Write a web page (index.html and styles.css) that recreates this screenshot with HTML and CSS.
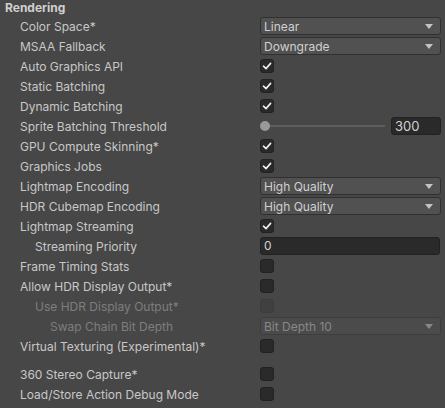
FILE: index.html
```html
<!DOCTYPE html>
<html>
<head>
<meta charset="utf-8">
<link rel="stylesheet" href="styles.css">
</head>
<body>
<div class="panel">
  <div class="header">Rendering</div>

  <div class="row"><div class="label">Color Space*</div><div class="value"><div class="dropdown"><span>Linear</span><i class="arrow"></i></div></div></div>
  <div class="row"><div class="label">MSAA Fallback</div><div class="value"><div class="dropdown"><span>Downgrade</span><i class="arrow"></i></div></div></div>
  <div class="row"><div class="label">Auto Graphics API</div><div class="value"><div class="check on"><svg viewBox="0 0 14 14"><path d="M3.5 7.2 L6 9.6 L10.6 4.4" /></svg></div></div></div>
  <div class="row"><div class="label">Static Batching</div><div class="value"><div class="check on"><svg viewBox="0 0 14 14"><path d="M3.5 7.2 L6 9.6 L10.6 4.4" /></svg></div></div></div>
  <div class="row"><div class="label">Dynamic Batching</div><div class="value"><div class="check on"><svg viewBox="0 0 14 14"><path d="M3.5 7.2 L6 9.6 L10.6 4.4" /></svg></div></div></div>
  <div class="row"><div class="label">Sprite Batching Threshold</div><div class="value slider-value"><div class="slider"><div class="track"></div><div class="thumb"></div></div><div class="field num">300</div></div></div>
  <div class="row"><div class="label">GPU Compute Skinning*</div><div class="value"><div class="check on"><svg viewBox="0 0 14 14"><path d="M3.5 7.2 L6 9.6 L10.6 4.4" /></svg></div></div></div>
  <div class="row"><div class="label">Graphics Jobs</div><div class="value"><div class="check on"><svg viewBox="0 0 14 14"><path d="M3.5 7.2 L6 9.6 L10.6 4.4" /></svg></div></div></div>
  <div class="row"><div class="label">Lightmap Encoding</div><div class="value"><div class="dropdown"><span>High Quality</span><i class="arrow"></i></div></div></div>
  <div class="row"><div class="label">HDR Cubemap Encoding</div><div class="value"><div class="dropdown"><span>High Quality</span><i class="arrow"></i></div></div></div>
  <div class="row"><div class="label">Lightmap Streaming</div><div class="value"><div class="check on"><svg viewBox="0 0 14 14"><path d="M3.5 7.2 L6 9.6 L10.6 4.4" /></svg></div></div></div>
  <div class="row"><div class="label indent1">Streaming Priority</div><div class="value"><div class="field wide">0</div></div></div>
  <div class="row"><div class="label">Frame Timing Stats</div><div class="value"><div class="check"></div></div></div>
  <div class="row"><div class="label">Allow HDR Display Output*</div><div class="value"><div class="check"></div></div></div>
  <div class="row disabled"><div class="label indent1">Use HDR Display Output*</div><div class="value"><div class="check"></div></div></div>
  <div class="row disabled"><div class="label indent2">Swap Chain Bit Depth</div><div class="value"><div class="dropdown"><span>Bit Depth 10</span><i class="arrow"></i></div></div></div>
  <div class="row"><div class="label">Virtual Texturing (Experimental)*</div><div class="value"><div class="check"></div></div></div>

  <div class="spacer"></div>

  <div class="row"><div class="label">360 Stereo Capture*</div><div class="value"><div class="check"></div></div></div>
  <div class="row"><div class="label">Load/Store Action Debug Mode</div><div class="value"><div class="check"></div></div></div>
</div>
</body>
</html>
```

FILE: styles.css
```css
html, body {
  margin: 0;
  padding: 0;
  background: #474747;
}
body {
  width: 445px;
  height: 408px;
  overflow: hidden;
  font-family: Inter, "Noto Sans", sans-serif;
  font-size: 12px;
  color: #c8c8c8;
}
.panel {
  display: flex;
  flex-direction: column;
}
.header {
  height: 16px;
  line-height: 16px;
  padding-left: 5px;
  font-weight: 700;
  color: #d0d0d0;
}
.row {
  display: flex;
  align-items: center;
  height: 20px;
}
.label {
  width: 260px;
  box-sizing: border-box;
  padding-left: 20px;
  white-space: nowrap;
}
.label.indent1 { padding-left: 35px; }
.label.indent2 { padding-left: 50px; }
.value {
  width: 181px;
  display: flex;
  align-items: center;
}
.dropdown {
  box-sizing: border-box;
  width: 181px;
  height: 18px;
  background: #515151;
  border: 1px solid #303030;
  border-radius: 3px;
  display: flex;
  align-items: center;
  justify-content: space-between;
  padding: 0 7px 0 3px;
  color: #d0d0d0;
}
.arrow {
  width: 0;
  height: 0;
  border-left: 4px solid transparent;
  border-right: 4px solid transparent;
  border-top: 5px solid #c4c4c4;
}
.check {
  box-sizing: border-box;
  width: 14px;
  height: 14px;
  background: #2a2a2a;
  border: 1px solid #212121;
  border-radius: 3px;
  display: flex;
  align-items: center;
  justify-content: center;
}
.check svg {
  width: 14px;
  height: 14px;
  flex: none;
}
.check svg path {
  fill: none;
  stroke: #f0f0f0;
  stroke-width: 1.6;
  stroke-linecap: round;
  stroke-linejoin: round;
}
.field {
  box-sizing: border-box;
  height: 18px;
  background: #2a2a2a;
  border: 1px solid #212121;
  border-radius: 3px;
  padding-left: 3px;
  line-height: 16px;
  color: #d2d2d2;
}
.field.wide { width: 180px; }
.field.num { width: 50px; font-size: 13px; }
.slider-value { justify-content: space-between; }
.slider {
  position: relative;
  width: 126px;
  height: 14px;
  display: flex;
  align-items: center;
}
.track {
  margin-left: 4px;
  width: 121px;
  height: 2px;
  background: #5e5e5e;
}
.thumb {
  position: absolute;
  left: 0;
  top: 2px;
  width: 10px;
  height: 10px;
  border-radius: 50%;
  background: #999999;
}
.disabled .label { color: #7e7e7e; }
.disabled .check {
  background: #404040;
  border-color: #3c3c3c;
}
.disabled .dropdown {
  background: #4b4b4b;
  border-color: #3d3d3d;
  color: #888888;
}
.disabled .arrow { border-top-color: #888888; }
.spacer { height: 8px; }
```
